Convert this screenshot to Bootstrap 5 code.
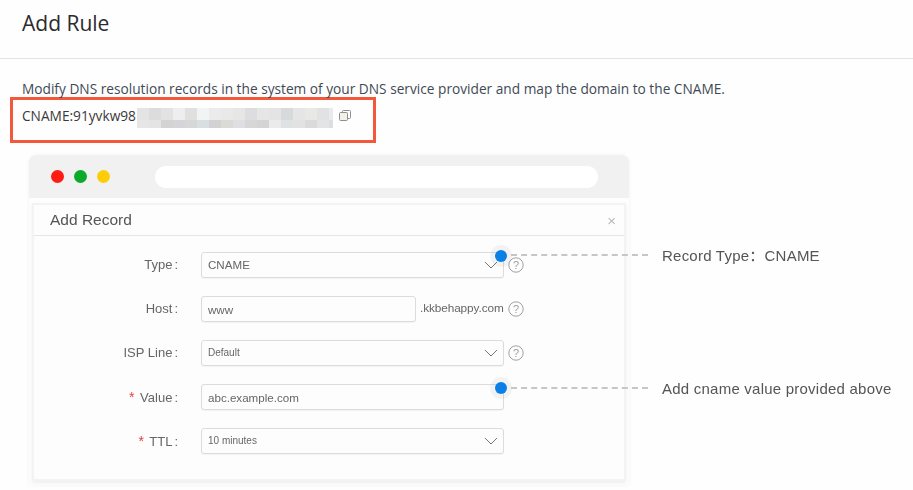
<!DOCTYPE html>
<html lang="en">
<head>
<meta charset="utf-8">
<title>Add Rule</title>
<link rel="stylesheet" href="https://cdn.jsdelivr.net/npm/bootstrap@5.3.0/dist/css/bootstrap.min.css">
<style>
html,body{height:490px;overflow:hidden}
body{background:#fefefe;color:#333;font-family:"Open Sans","Noto Sans",sans-serif}
.top-bar{height:59px;padding:4px 22px 0;border-bottom:1px solid #e3e3e3}
.top-title{font-size:21px;font-weight:400;line-height:38px;margin:0;color:#2b2b2b}
.intro{margin:21px 22px 0;font-size:13.7px;line-height:18px;color:#3f4a55;white-space:nowrap}
.cname-box{margin:-1px 0 0 10px;width:366px;height:46px;border:3px solid #f2593a;padding:6px 9px 0;font-size:13.7px;line-height:20px;color:#3a3a3a}
.censor{width:196px;height:20px;margin:2px 6px 0 1px;flex:none}
.censor-top{height:12px;background:linear-gradient(90deg,#e4e4e4 0 12px,#dcdcdc 12px 24px,#e2e2e2 24px 36px,#eee 36px 48px,#e0e0e0 48px 60px,#f2f3f3 60px 72px,#ebebeb 72px 84px,#e9e9e9 84px 96px,#e6e6e4 96px 108px,#dddde0 108px 120px,#e6e6e6 120px 132px,#e4e4e4 132px 144px,#d8d9da 144px 156px,#e5e5e5 156px 168px,#e8e8e6 168px 180px,#e2e2e2 180px 192px,#e8eaec 192px)}
.censor-bottom{height:8px;background:linear-gradient(90deg,#e6e6e6 0 12px,#e4e4e4 12px 24px,#d3d3d3 24px 36px,#d5d4d8 36px 48px,#d6d8d8 48px 60px,#d9dee0 60px 72px,#d2d2d2 72px 84px,#dcdad5 84px 96px,#dfdfe2 96px 108px,#d7d7d7 108px 120px,#d4d4d4 120px 132px,#ebebeb 132px 144px,#dfe1e2 144px 156px,#e2e2e2 156px 168px,#dadada 168px 180px,#e4e4e4 180px 192px,#dcdfe1 192px)}
.mock-stage{position:relative;margin:12px 0 0 29px;width:600px;height:330px}
.mock-window{width:600px;height:330px;background:#fdfdfd;border-radius:7px 7px 0 0;box-shadow:0 0 4px rgba(0,0,0,.05);padding:0 3px 0 3px;filter:blur(.35px);font-family:"Liberation Sans",Arial,"Noto Sans CJK SC",sans-serif}
.mock-titlebar{height:43px;margin:0 -3px;padding:0 31px 0 22px;background:#f1f1f1;border-radius:7px 7px 0 0;gap:10px}
.traffic{width:13px;height:13px;border-radius:50%}
.traffic-red{background:#ff1c12}
.traffic-green{background:#0aaa2a}
.traffic-yellow{background:#fdcd0a}
.addr-bar{height:22px;margin-left:35px;background:#fff;border-radius:11px}
.mock-dialog{margin-top:5px;height:278px;border:2px solid #f3f3f3;border-radius:0;background:#fdfdfd;box-shadow:0 2px 3px rgba(0,0,0,.06)}
.mock-head{height:31px;padding:0 8px 0 16px;background:transparent;border-bottom:1px solid #e6e6e6;font-size:15.5px;color:#555}
.mock-x{font-size:15px;line-height:1;color:#bbb}
.mock-body{padding:16px 0 0;gap:18px}
.mock-row{height:26px}
.mock-label{width:144px;text-align:right;font-size:13px;color:#666;margin-right:23px;flex:none}
.mock-colon{margin-left:2px}
.mock-star{color:#e2413f;font-size:14px;margin-right:2px}
.mock-control.form-control,.mock-control.form-select{width:303px;height:26px;min-height:0;flex:none;padding:0 6px;border:1px solid #dcdcdc;border-radius:3px;background-color:#fdfdfd;color:#666;font-size:11.6px;line-height:24px;box-shadow:0 1px 1px rgba(0,0,0,.04)}
.mock-control.form-select{--bs-form-select-bg-img:url("data:image/svg+xml,%3csvg xmlns='http://www.w3.org/2000/svg' viewBox='0 0 14 8'%3e%3cpath fill='none' stroke='%23777' stroke-width='1' d='M1 1l6 6 6-6'/%3e%3c/svg%3e");background-size:14px 8px;background-position:right 5px center;padding-right:24px}
.mock-control.mock-tiny{font-size:10px}
.mock-control.mock-short{width:215px}
.mock-suffix{font-size:11.8px;color:#666;margin-left:4px;letter-spacing:-.1px;width:84px;flex:none}
.mock-help{width:16px;height:16px;margin-left:4px;flex:none;color:#a0a0a0}
.pin{position:absolute;width:12px;height:12px;border-radius:50%;background:#0a7fe6;box-shadow:0 0 0 5px rgba(0,0,0,.045);filter:blur(.3px)}
.pin-one{left:466px;top:95px}
.pin-two{left:466px;top:227px}
.lead-line{position:absolute;left:482px;width:137px;border-top:2px dashed #c6c6c6;filter:blur(.3px)}
.line-one{top:99px}
.line-two{top:232px}
.callout{position:absolute;left:633px;font-size:15px;letter-spacing:.23px;line-height:18px;color:#555;white-space:nowrap;font-family:"Liberation Sans",Arial,"Noto Sans CJK SC",sans-serif;filter:blur(.25px)}
.call-one{top:92px}
.call-two{top:225px}
</style>
</head>
<body>
<header class="top-bar"><h1 class="top-title">Add Rule</h1></header>
<main>
  <p class="intro">Modify DNS resolution records in the system of your DNS service provider and map the domain to the CNAME.</p>
  <div class="cname-box d-flex align-items-start">
    <span>CNAME:91yvkw98</span>
    <div class="censor">
      <div class="censor-top"></div>
      <div class="censor-bottom"></div>
    </div>
    <svg width="12" height="12" viewBox="0 0 12 12" class="mt-1" aria-label="copy" role="img"><rect x="3.5" y=".5" width="8" height="8" rx="1" fill="#fff" stroke="#8a8f98"/><rect x=".5" y="2.5" width="8" height="8" rx="1" fill="#f4f1e6" stroke="#8a8f98"/></svg>
  </div>
  <div class="mock-stage">
    <div class="mock-window">
      <div class="mock-titlebar d-flex align-items-center">
        <span class="traffic traffic-red"></span>
        <span class="traffic traffic-green"></span>
        <span class="traffic traffic-yellow"></span>
        <div class="addr-bar flex-grow-1"></div>
      </div>
      <section class="mock-dialog card">
        <div class="mock-head card-header d-flex align-items-center justify-content-between">
          <span>Add Record</span><span class="mock-x">×</span>
        </div>
        <div class="mock-body d-flex flex-column">
          <div class="mock-row d-flex align-items-center">
            <label class="mock-label">Type<span class="mock-colon">:</span></label>
            <select class="mock-control form-select"><option>CNAME</option></select>
            <svg class="mock-help" viewBox="0 0 16 16"><circle cx="8" cy="8" r="7.2" fill="none" stroke="currentColor"/><text x="8" y="12" text-anchor="middle" font-size="11" fill="currentColor">?</text></svg>
          </div>
          <div class="mock-row d-flex align-items-center">
            <label class="mock-label">Host<span class="mock-colon">:</span></label>
            <input class="mock-control mock-short form-control" value="www" readonly>
            <span class="mock-suffix">.kkbehappy.com</span>
            <svg class="mock-help" viewBox="0 0 16 16"><circle cx="8" cy="8" r="7.2" fill="none" stroke="currentColor"/><text x="8" y="12" text-anchor="middle" font-size="11" fill="currentColor">?</text></svg>
          </div>
          <div class="mock-row d-flex align-items-center">
            <label class="mock-label">ISP Line<span class="mock-colon">:</span></label>
            <select class="mock-control mock-tiny form-select"><option>Default</option></select>
            <svg class="mock-help" viewBox="0 0 16 16"><circle cx="8" cy="8" r="7.2" fill="none" stroke="currentColor"/><text x="8" y="12" text-anchor="middle" font-size="11" fill="currentColor">?</text></svg>
          </div>
          <div class="mock-row d-flex align-items-center">
            <label class="mock-label"><span class="mock-star">*</span> Value<span class="mock-colon">:</span></label>
            <input class="mock-control form-control" value="abc.example.com" readonly>
          </div>
          <div class="mock-row d-flex align-items-center">
            <label class="mock-label"><span class="mock-star">*</span> TTL<span class="mock-colon">:</span></label>
            <select class="mock-control mock-tiny form-select"><option>10 minutes</option></select>
          </div>
        </div>
      </section>
    </div>
    <span class="pin pin-one"></span>
    <span class="lead-line line-one"></span>
    <span class="callout call-one">Record Type：CNAME</span>
    <span class="pin pin-two"></span>
    <span class="lead-line line-two"></span>
    <span class="callout call-two">Add cname value provided above</span>
  </div>
</main>
<script src="https://cdn.jsdelivr.net/npm/bootstrap@5.3.0/dist/js/bootstrap.bundle.min.js"></script>
</body>
</html>
